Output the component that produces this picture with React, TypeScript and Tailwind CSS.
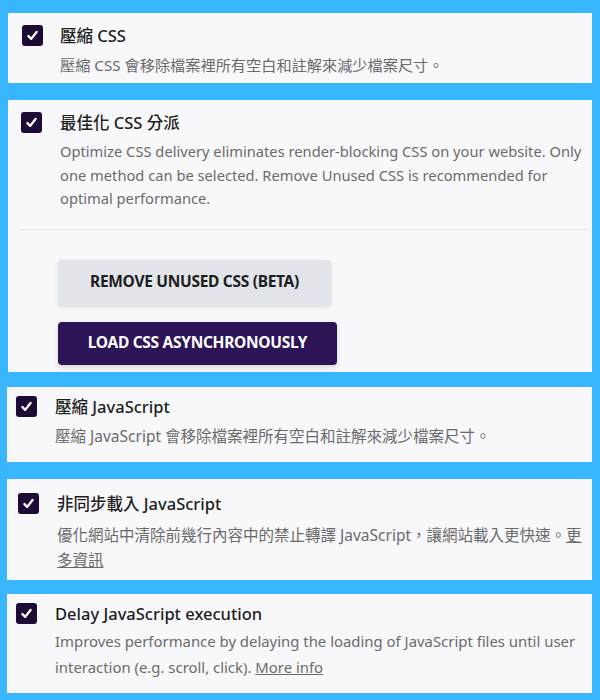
import React from "react";

const FONT = '"Noto Sans", "Noto Sans CJK TC", sans-serif';

function Check({ className = "" }: { className?: string }) {
  return (
    <div
      className={
        "flex h-[21px] w-[21px] shrink-0 items-center justify-center rounded-[3px] bg-[#1d0b35] " +
        className
      }
    >
      <svg width="13" height="13" viewBox="0 0 14 14" fill="none">
        <path
          d="M2.6 7.6 L5.6 10.6 L11.4 3.2"
          stroke="#ffffff"
          strokeWidth="2.5"
          strokeLinecap="round"
          strokeLinejoin="round"
        />
      </svg>
    </div>
  );
}

export default function App() {
  return (
    <div
      className="min-h-[700px] w-[600px] bg-[#38b6ff] pt-[13px]"
      style={{ fontFamily: FONT }}
    >
      {/* Panel 1 */}
      <div className="ml-[8px] w-[584px] bg-[#f8f8fb] pb-[6px] pl-[14px] pr-[4px] pt-[12px]">
        <div className="flex gap-[17px]">
          <Check />
          <div className="flex-1">
            <div className="text-[16.5px] font-medium leading-[22px] text-[#1e1e1e]">壓縮 CSS</div>
            <div className="mt-[6px] text-[15.2px] leading-[24px] text-[#6b6b6b]">
              壓縮 CSS 會移除檔案裡所有空白和註解來減少檔案尺寸。
            </div>
          </div>
        </div>
      </div>

      {/* Panel 2 */}
      <div className="ml-[8px] mt-[17px] w-[584px] bg-[#f8f8fb] pb-[7px] pt-[12px]">
        <div className="flex gap-[18px] pl-[13px] pr-[2px]">
          <Check />
          <div className="flex-1">
            <div className="text-[16.5px] font-medium leading-[22px] text-[#1e1e1e]">最佳化 CSS 分派</div>
            <div className="mt-[6px] text-[14.7px] leading-[23.5px] text-[#6b6b6b]">
              Optimize CSS delivery eliminates render-blocking CSS on your website. Only one method can be
              selected. Remove Unused CSS is recommended for optimal performance.
            </div>
          </div>
        </div>
        <div className="ml-[12px] mr-[3px] mt-[18px] h-px bg-[#e6e7ec]" />
        <div className="mt-[30px] flex flex-col items-start gap-[17px] pl-[50px]">
          <button className="h-[45px] w-[273px] rounded-[4px] bg-[#e1e4e9] text-[15.5px] font-bold tracking-[-0.3px] text-[#1d1d1d] shadow-[0_2px_4px_rgba(0,0,0,0.12)]">
            REMOVE UNUSED CSS (BETA)
          </button>
          <button className="h-[43px] w-[279px] rounded-[4px] bg-[#2d1457] text-[15.5px] font-bold tracking-[-0.3px] text-white shadow-[0_2px_4px_rgba(0,0,0,0.15)]">
            LOAD CSS ASYNCHRONOUSLY
          </button>
        </div>
      </div>

      {/* Panel 3 */}
      <div className="ml-[7px] mt-[15px] w-[585px] bg-[#f8f8fb] pb-[14px] pl-[9px] pr-[4px] pt-[9px]">
        <div className="flex gap-[18px]">
          <Check />
          <div className="flex-1">
            <div className="text-[16.5px] font-medium leading-[22px] text-[#1e1e1e]">壓縮 JavaScript</div>
            <div className="mt-[6px] text-[15.5px] leading-[24px] text-[#6b6b6b]">
              壓縮 JavaScript 會移除檔案裡所有空白和註解來減少檔案尺寸。
            </div>
          </div>
        </div>
      </div>

      {/* Panel 4 */}
      <div className="ml-[7px] mt-[17px] w-[585px] bg-[#f8f8fb] pb-[7px] pl-[11px] pr-[4px] pt-[14px]">
        <div className="flex gap-[18px]">
          <Check />
          <div className="flex-1">
            <div className="text-[16.5px] font-medium leading-[22px] text-[#1e1e1e]">非同步載入 JavaScript</div>
            <div className="mt-[8px] text-[15.5px] leading-[25px] text-[#6b6b6b]">
              優化網站中清除前幾行內容中的禁止轉譯 JavaScript，讓網站載入更快速。<span className="underline">更多資訊</span>
            </div>
          </div>
        </div>
      </div>

      {/* Panel 5 */}
      <div className="ml-[7px] mt-[14px] w-[585px] bg-[#f8f8fb] pb-[13px] pl-[9px] pr-[4px] pt-[9px]">
        <div className="flex gap-[18px]">
          <Check />
          <div className="flex-1">
            <div className="text-[16.5px] font-medium leading-[22px] text-[#1e1e1e]">Delay JavaScript execution</div>
            <div className="mt-[3px] text-[14.9px] leading-[26px] text-[#6b6b6b]">
              Improves performance by delaying the loading of JavaScript files until user interaction (e.g.
              scroll, click). <span className="underline">More info</span>
            </div>
          </div>
        </div>
      </div>
    </div>
  );
}
